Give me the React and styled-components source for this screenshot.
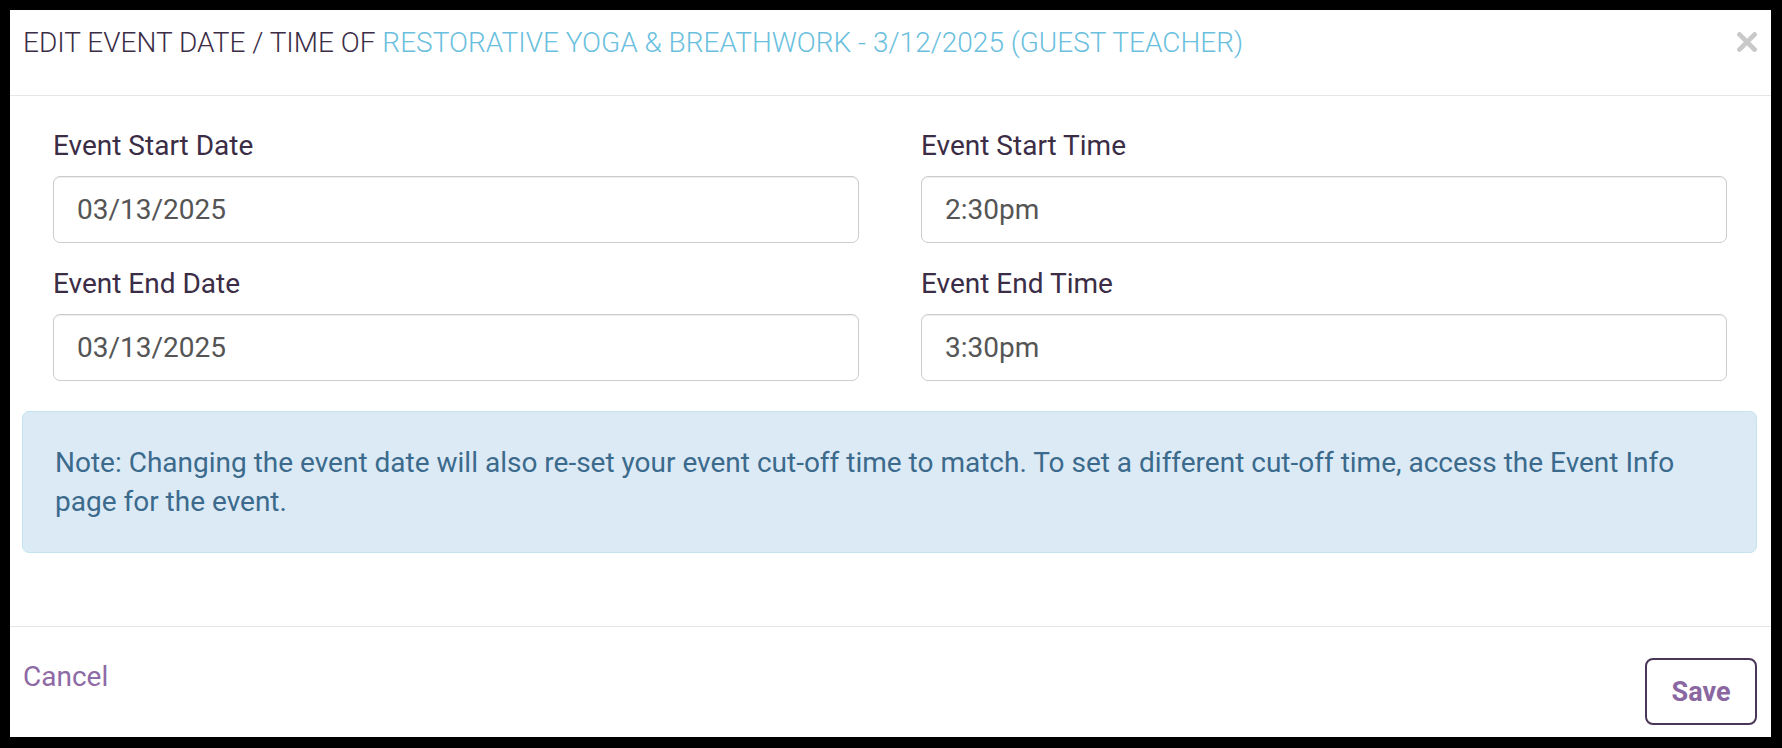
import styled, { createGlobalStyle } from 'styled-components';

const GlobalStyle = createGlobalStyle`
  html, body {
    margin: 0;
    padding: 0;
    background: #000;
  }
  * {
    box-sizing: border-box;
  }
`;

const Frame = styled.div`
  width: 1782px;
  height: 748px;
  padding: 10px 11px 11px 10px;
  background: #000;
`;

const Modal = styled.div`
  height: 100%;
  background: #fff;
  display: flex;
  flex-direction: column;
  font-family: Roboto, 'Liberation Sans', sans-serif;
`;

const Header = styled.div`
  height: 86px;
  padding: 13px 14px 0 13px;
  border-bottom: 1px solid #e5e5e5;
  display: flex;
  justify-content: space-between;
  align-items: flex-start;
`;

const Title = styled.h4`
  margin: 0;
  font-size: 28px;
  line-height: 40px;
  font-weight: 300;
  color: #3b2d46;
  text-transform: uppercase;
  span {
    color: #6bbfde;
  }
`;

const Close = styled.button`
  border: none;
  background: none;
  padding: 0;
  margin-top: 9px;
  width: 20px;
  height: 20px;
  cursor: pointer;
  svg {
    display: block;
  }
`;

const Body = styled.div`
  padding: 35px 14px 73px 12px;
`;

const Fields = styled.div`
  display: grid;
  grid-template-columns: 1fr 1fr;
  column-gap: 62px;
  row-gap: 26px;
  padding: 0 30px 0 31px;
`;

const Field = styled.div`
  display: flex;
  flex-direction: column;
`;

const Label = styled.label`
  font-size: 28px;
  line-height: 30px;
  color: #3b2d46;
  margin-bottom: 15px;
`;

const Input = styled.input`
  height: 67px;
  width: 100%;
  padding: 0 23px;
  border: 1px solid #cccccc;
  border-radius: 7px;
  box-shadow: inset 0 1px 1px rgba(0, 0, 0, 0.075);
  font-family: Roboto, 'Liberation Sans', sans-serif;
  font-size: 28px;
  color: #555;
  outline: none;
`;

const Note = styled.div`
  margin-top: 30px;
  padding: 31px 32px;
  background: #dceaf6;
  border: 1px solid #c2e5ef;
  border-radius: 7px;
  color: #3b6a8c;
  font-size: 28px;
  line-height: 39px;
`;

const Footer = styled.div`
  flex: 1;
  border-top: 1px solid #e5e5e5;
  padding: 30px 14px 0 13px;
  display: flex;
  justify-content: space-between;
  align-items: flex-start;
`;

const CancelLink = styled.a`
  font-size: 28px;
  line-height: 39px;
  color: #8e6aa6;
  text-decoration: none;
  cursor: pointer;
`;

const SaveButton = styled.button`
  width: 112px;
  height: 67px;
  margin-top: 1px;
  border: 2px solid #4a3656;
  border-radius: 8px;
  background: #fff;
  color: #8b67a1;
  font-family: Roboto, 'Liberation Sans', sans-serif;
  font-size: 27px;
  font-weight: 700;
  cursor: pointer;
`;

const fields = [
  { label: 'Event Start Date', value: '03/13/2025' },
  { label: 'Event Start Time', value: '2:30pm' },
  { label: 'Event End Date', value: '03/13/2025' },
  { label: 'Event End Time', value: '3:30pm' },
];

export default function App() {
  return (
    <>
      <GlobalStyle />
      <Frame>
        <Modal>
          <Header>
            <Title>
              Edit Event Date / Time of{' '}
              <span>Restorative Yoga &amp; Breathwork - 3/12/2025 (Guest Teacher)</span>
            </Title>
            <Close aria-label="Close">
              <svg width="20" height="20" viewBox="0 0 20 20">
                <path
                  d="M2.5 2.5 L17.5 17.5 M17.5 2.5 L2.5 17.5"
                  stroke="#c9c9c9"
                  strokeWidth="4.6"
                  strokeLinecap="square"
                />
              </svg>
            </Close>
          </Header>
          <Body>
            <Fields>
              {fields.map((f) => (
                <Field key={f.label}>
                  <Label>{f.label}</Label>
                  <Input type="text" defaultValue={f.value} />
                </Field>
              ))}
            </Fields>
            <Note>
              Note: Changing the event date will also re-set your event cut-off time to match. To set
              a different cut-off time, access the Event Info page for the event.
            </Note>
          </Body>
          <Footer>
            <CancelLink>Cancel</CancelLink>
            <SaveButton>Save</SaveButton>
          </Footer>
        </Modal>
      </Frame>
    </>
  );
}
